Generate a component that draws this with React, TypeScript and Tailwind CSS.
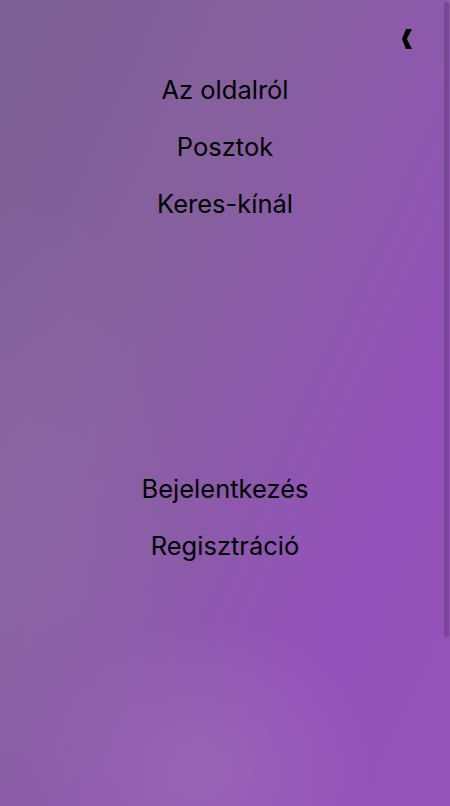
const font = { fontFamily: "Inter, 'Noto Sans', sans-serif" };

const topLinks = ["Az oldalról", "Posztok", "Keres-kínál"];
const authLinks = ["Bejelentkezés", "Regisztráció"];

function NavLink({ label }: { label: string }) {
  return (
    <a href="#" className="block h-[57px] leading-[57px] text-center text-[25.5px] text-black">
      {label}
    </a>
  );
}

export default function App() {
  return (
    <div
      className="relative h-[806px] w-full overflow-hidden bg-[radial-gradient(ellipse_170px_150px_at_200px_770px,rgba(160,118,180,0.5),transparent),radial-gradient(ellipse_160px_320px_at_40px_520px,rgba(150,110,175,0.3),transparent),linear-gradient(115deg,#7c6194_0%,#86609e_35%,#9352b9_75%,#9353b8_100%)]"
      style={font}
    >
      <button className="absolute right-[38px] top-[29px] flex h-[20px] w-[10px] items-center justify-center" aria-label="Bezár">
        <svg viewBox="0 0 10 20" className="h-[20px] w-[10px]">
          <polygon points="4,0 10,0 4.8,10 10,20 4,20 0,10" fill="#000" />
        </svg>
      </button>

      <nav className="flex flex-col items-center">
        <div className="mt-[61px] flex flex-col">
          {topLinks.map((l) => (
            <NavLink key={l} label={l} />
          ))}
        </div>
        <div className="mt-[228px] flex flex-col">
          {authLinks.map((l) => (
            <NavLink key={l} label={l} />
          ))}
        </div>
      </nav>

      {/* scrollbar thumb */}
      <div className="absolute right-[1px] top-[2px] h-[635px] w-[5px] rounded-full bg-[rgba(60,40,80,0.3)]" />
    </div>
  );
}
